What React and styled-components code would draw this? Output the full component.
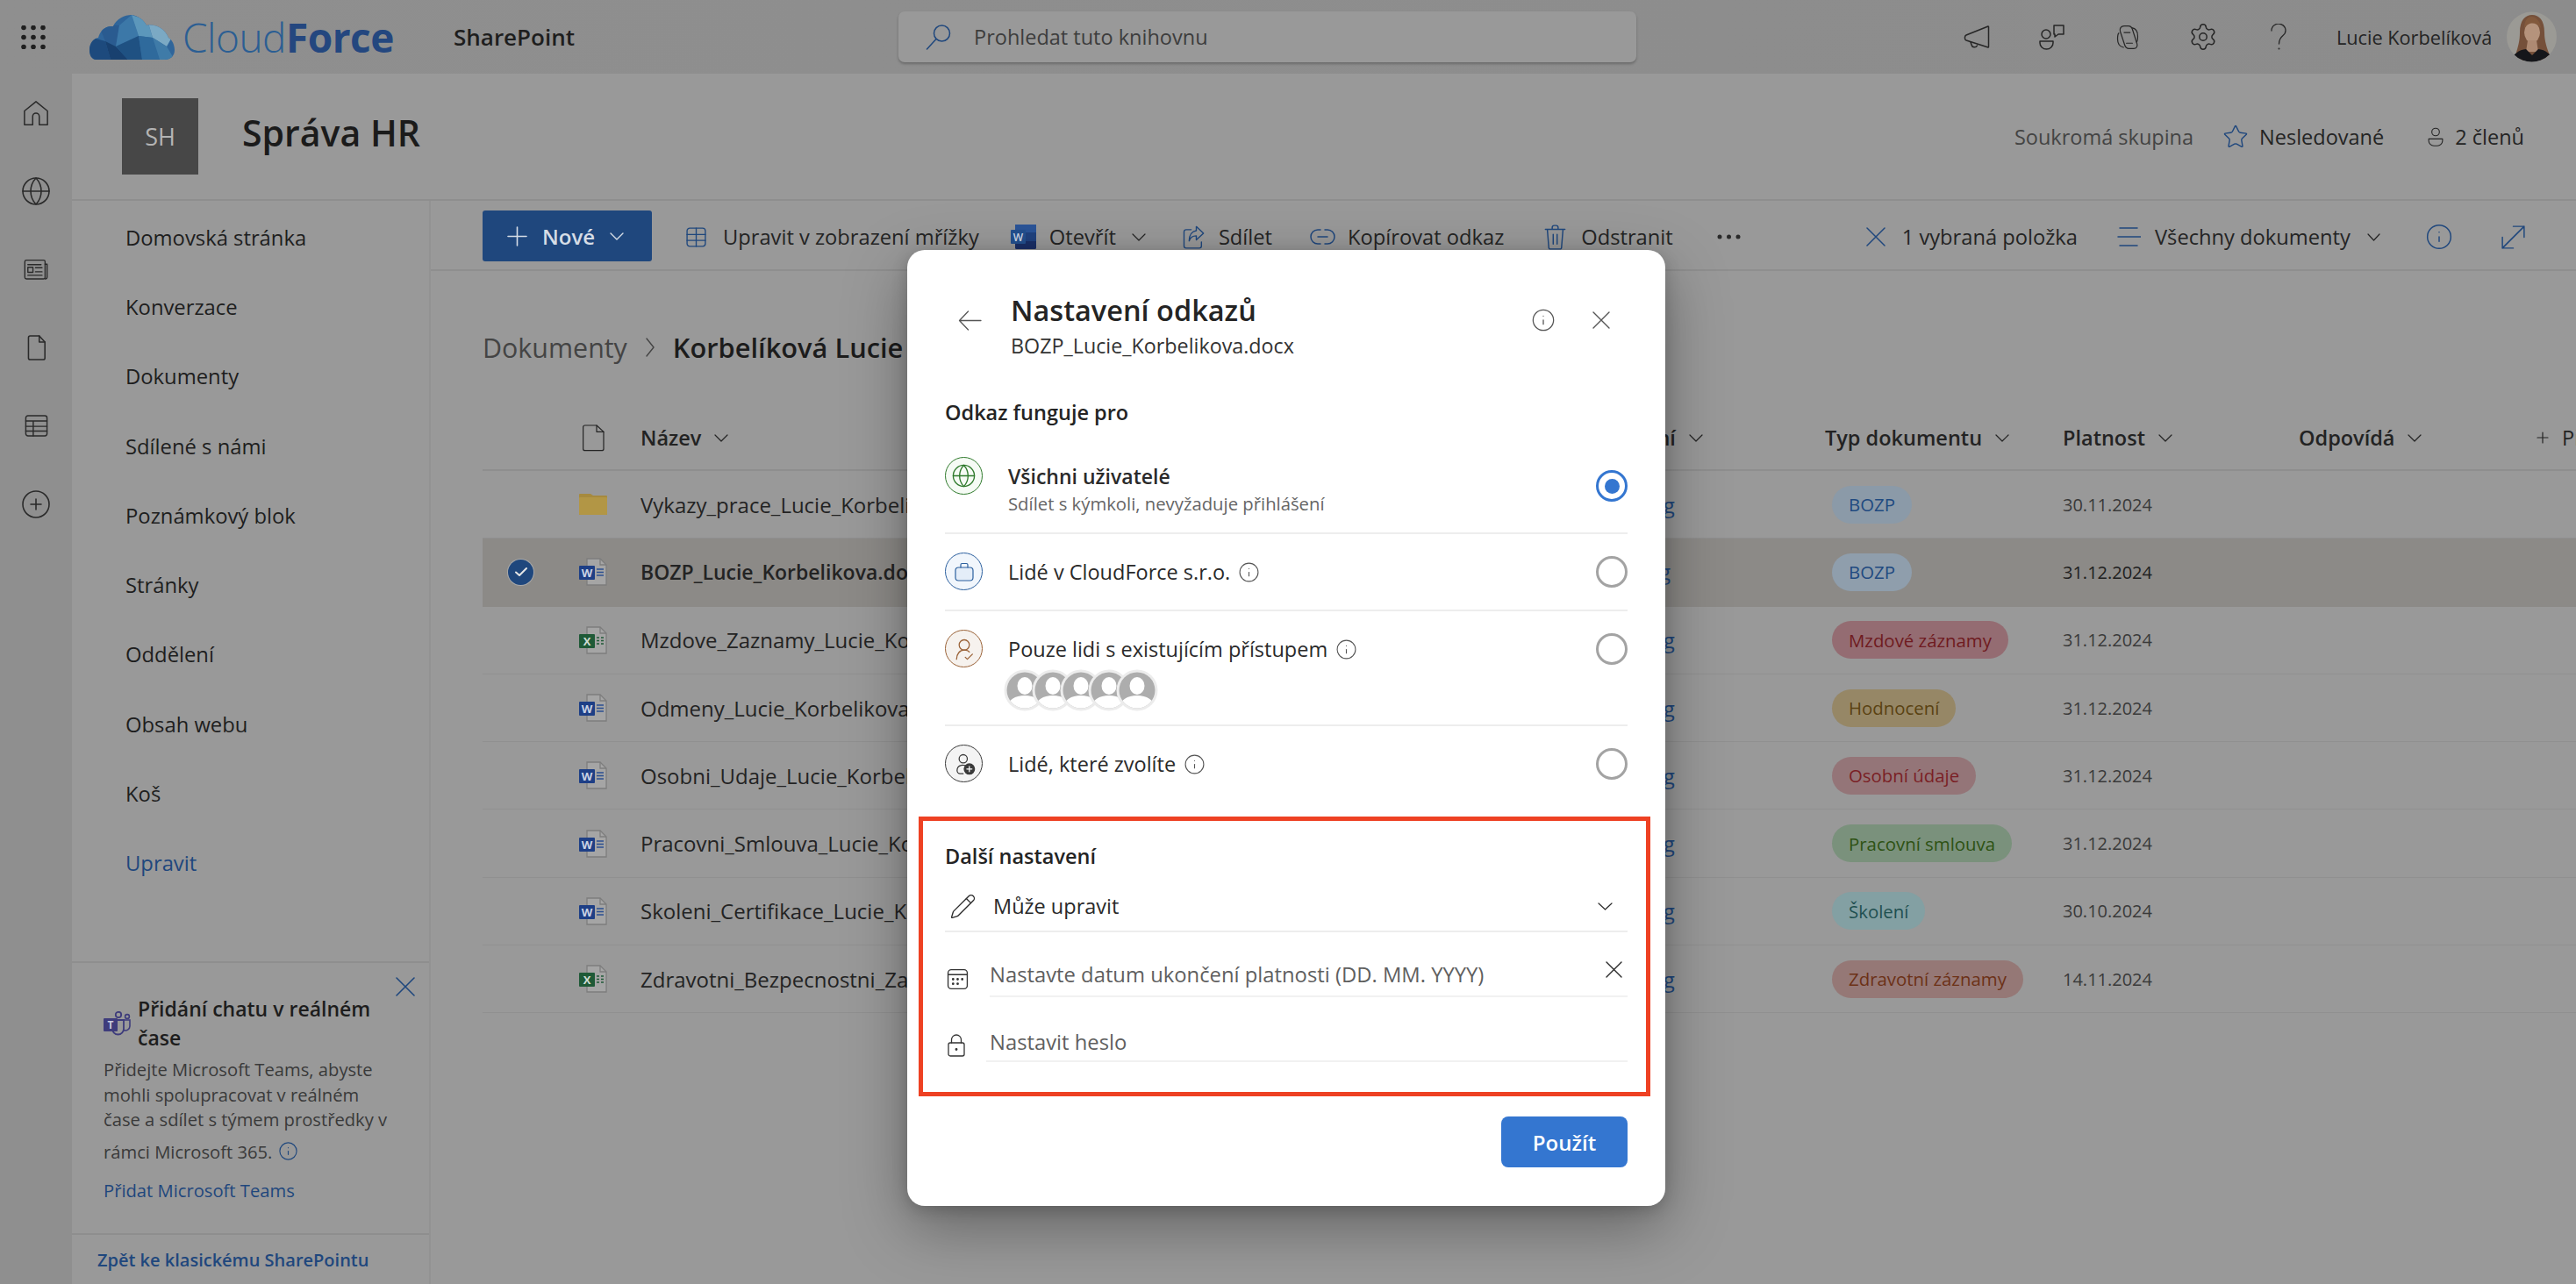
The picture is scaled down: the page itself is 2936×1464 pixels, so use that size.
import React from 'react'
import styled, { createGlobalStyle } from 'styled-components'
import { CirclePlus, Globe, Info, Pencil, Settings, Star } from 'lucide-react'

const FONT = '"Open Sans", "Noto Sans", sans-serif'
const BLUE = '#3476d0'
const DIM_BLUE = '#1f477d'

const Global = createGlobalStyle`
  html, body { margin: 0; padding: 0; background: #999; }
  body { font-family: ${FONT}; color: #1c1c1c; }
  * { box-sizing: border-box; }
`

const Page = styled.div`
  position: relative;
  width: 2936px;
  height: 1464px;
  overflow: hidden;
  display: flex;
  flex-direction: column;
  background: #999;
`

/* top bar */
const TopBar = styled.header`
  height: 84px;
  flex: none;
  display: flex;
  align-items: center;
  background: linear-gradient(90deg, #8f8f8f, #8c8c8c);
`
const Brand = styled.div`
  width: 1024px;
  display: flex;
  align-items: center;
  padding-left: 24px;
`
const BrandGap = styled.span`
  width: 50px;
`
const LogoText = styled.div`
  margin-left: 9px;
  font-size: 46px;
  letter-spacing: -0.5px;
  font-weight: 300;
  color: #2b5e93;
  width: 309px;
  b { font-weight: 700; color: #24477f; }
`
const AppName = styled.div`
  font-size: 26px;
  font-weight: 600;
  color: #1e1e1e;
`
const Search = styled.div`
  width: 841px;
  height: 58px;
  display: flex;
  align-items: center;
  gap: 25px;
  padding-left: 31px;
  background: #999;
  border-radius: 7px;
  box-shadow: 0 2px 3px rgba(0, 0, 0, 0.25);
  font-size: 23.5px;
  color: #3d3d3d;
`
const TopActions = styled.div`
  flex: 1;
  display: flex;
  align-items: center;
  padding-left: 345px;
  color: #262626;
`
const TopIcon = styled.span`
  width: 86px;
  display: flex;
  justify-content: center;
`
const UserName = styled.div`
  margin-left: 23px;
  width: 194px;
  font-size: 21.7px;
  color: #242424;
  white-space: nowrap;
`

/* frame */
const Body = styled.div`
  flex: 1;
  display: flex;
  min-height: 0;
`
const Rail = styled.nav`
  width: 82px;
  flex: none;
  display: flex;
  flex-direction: column;
  align-items: center;
  background: #8f8f8f;
  color: #2a2a2a;
`
const RailSlot = styled.span`
  height: 89.2px;
  display: flex;
  align-items: center;
  justify-content: center;
`
const Content = styled.div`
  flex: 1;
  display: flex;
  flex-direction: column;
  min-width: 0;
`
const Hero = styled.div`
  height: 145px;
  flex: none;
  display: flex;
  align-items: center;
  padding-left: 57px;
  border-bottom: 2px solid #8e8e8e;
`
const SiteTile = styled.div`
  width: 87px;
  height: 87px;
  display: flex;
  align-items: center;
  justify-content: center;
  background: #474747;
  color: #b4b4b4;
  font-size: 27px;
`
const SiteTitle = styled.h1`
  margin: 0 0 9px 50px;
  font-size: 41px;
  font-weight: 600;
  color: #1b1b1b;
`
const HeroMeta = styled.div`
  margin-left: auto;
  display: flex;
  align-items: center;
  padding-right: 59px;
  font-size: 23.5px;
  color: #242424;
`
const MetaLabel = styled.span`
  color: #444;
  margin-right: 33px;
`
const MetaItem = styled.span`
  display: flex;
  align-items: center;
  gap: ${p => p.$gap || 15}px;
  margin-left: ${p => p.$ml || 0}px;
`

const Lower = styled.div`
  flex: 1;
  display: flex;
  min-height: 0;
`
const Sidebar = styled.aside`
  width: 409px;
  flex: none;
  display: flex;
  flex-direction: column;
  border-right: 2px solid #929292;
`
const NavList = styled.div`
  padding-top: 2px;
`
const NavItem = styled.div`
  height: 79.3px;
  display: flex;
  align-items: center;
  padding-left: 61px;
  font-size: 23.8px;
  color: ${p => (p.$link ? DIM_BLUE : '#1e1e1e')};
`
const ChatCard = styled.div`
  position: relative;
  margin-top: auto;
  height: 312px;
  border-top: 2px solid #8e8e8e;
  border-bottom: 2px solid #8e8e8e;
  padding: 36px 0 0 36px;
`
const ChatClose = styled.span`
  position: absolute;
  top: 16px;
  right: 16px;
  color: ${DIM_BLUE};
  display: flex;
`
const ChatHead = styled.div`
  display: flex;
  align-items: center;
  gap: 8px;
  font-size: 23px;
  font-weight: 600;
  line-height: 33px;
  color: #1d1d1d;
`
const ChatText = styled.p`
  margin: ${p => p.$mt || 0}px 0 0;
  font-size: 20.2px;
  line-height: 28.5px;
  color: #3a3a3a;
  white-space: nowrap;
  padding-top: 1px;
`
const LastLine = styled.div`
  display: flex;
  align-items: center;
  gap: 7px;
  margin-top: 7px;
`
const ChatLink = styled.div`
  font-size: 20.2px;
  color: ${DIM_BLUE};
  margin-top: 16px;
`
const ClassicLink = styled.div`
  height: 56px;
  display: flex;
  align-items: center;
  padding-left: 29px;
  font-size: 20px;
  font-weight: 600;
  color: ${DIM_BLUE};
`

/* command bar */
const Main = styled.main`
  flex: 1;
  min-width: 0;
  display: flex;
  flex-direction: column;
`
const CommandBar = styled.div`
  height: 80px;
  flex: none;
  display: flex;
  align-items: center;
  padding-left: 59px;
  border-bottom: 2px solid #8e8e8e;
  font-size: 23.7px;
  color: #242424;
`
const NewButton = styled.div`
  width: 193px;
  height: 58px;
  margin-top: 2px;
  display: flex;
  align-items: center;
  gap: 17px;
  padding-left: 28px;
  background: ${DIM_BLUE};
  border-radius: 3px;
  color: #d6dde6;
  font-size: 24px;
  font-weight: 600;
`
const Command = styled.div`
  display: flex;
  align-items: center;
  gap: ${p => p.$gap || 14}px;
  margin-left: ${p => p.$ml}px;
  padding-top: 4px;
  flex: none;
`
const CommandChevron = styled.span`
  display: flex;
  margin-left: 3px;
`
const IconBlue = styled.span`
  display: flex;
  color: ${DIM_BLUE};
`

/* library */
const Crumbs = styled.div`
  height: 154px;
  flex: none;
  display: flex;
  align-items: center;
  gap: 21px;
  padding: 20px 0 0 59px;
  font-size: 30.4px;
  color: #444;
  strong { font-size: 30.800px; font-weight: 600; color: #1c1c1c; }
`
const COLS = '110px 70px 1060px 290px 271px 269px 271px 1fr'
const HeadRow = styled.div`
  height: 74px;
  margin-left: 59px;
  display: grid;
  grid-template-columns: ${COLS};
  align-items: center;
  border-bottom: 2px solid #8e8e8e;
  font-size: 23.500px;
  color: #232323;
`
const HeadCell = styled.div`
  display: flex;
  align-items: center;
  gap: 15px;
  white-space: nowrap;
  padding-left: ${p => p.$pl || 0}px;
  font-weight: ${p => (p.$regular ? 400 : 600)};
`
const Row = styled.div`
  height: 77.3px;
  margin-left: 59px;
  display: grid;
  grid-template-columns: ${COLS};
  align-items: center;
  font-size: ${p => (p.$selected ? 23 : 24)}px;
  border-bottom: 1.5px solid ${p => (p.$selected ? 'transparent' : '#909090')};
  background: ${p => (p.$selected ? '#8c8a87' : 'transparent')};
  color: #232323;
  font-weight: ${p => (p.$selected ? 600 : 400)};
`
const CheckCell = styled.div`
  display: flex;
  padding-left: 29px;
`
const CheckDot = styled.span`
  width: 29px;
  height: 29px;
  border-radius: 50%;
  background: ${DIM_BLUE};
  box-shadow: 0 0 0 1px #a9a9a9;
  display: flex;
  align-items: center;
  justify-content: center;
`
const NameCell = styled.div`
  white-space: nowrap;
  overflow: hidden;
`
const LinkCell = styled.div`
  color: ${DIM_BLUE};
  font-weight: 400;
`
const Pill = styled.span`
  justify-self: start;
  margin-left: 8px;
  height: 43px;
  padding: 0 19px;
  display: flex;
  align-items: center;
  border-radius: 21.5px;
  background: ${p => p.$bg};
  color: ${p => p.$fg};
  font-size: 20.4px;
  font-weight: 400;
  white-space: nowrap;
`
const DateCell = styled.div`
  font-size: 20px;
  font-weight: 400;
  color: ${p => (p.$selected ? '#202020' : '#3a3a3a')};
`

/* dialog */
const DialogSpot = styled.div`
  position: absolute;
  left: 1034px;
  top: 285px;
  width: 864px;
`
const Dialog = styled.section`
  width: 864px;
  height: 1090px;
  padding: 46px 43px 0;
  background: #fff;
  border-radius: 20px;
  box-shadow: 0 24px 70px rgba(0, 0, 0, 0.34), 0 4px 18px rgba(0, 0, 0, 0.18);
  color: #242424;
`
const DialogHead = styled.div`
  display: grid;
  grid-template-columns: 75px 1fr 60px 55px;
  align-items: center;
`
const BackArrow = styled.span`
  display: flex;
  padding-left: 15px;
  margin-bottom: 12px;
  color: #555;
`
const HeadTitle = styled.h2`
  margin: 0;
  font-size: 32.5px;
  line-height: 46px;
  font-weight: 600;
  color: #242424;
`
const HeadSub = styled.div`
  font-size: 23.3px;
  line-height: 34px;
  color: #333;
`
const HeadIcon = styled.span`
  display: flex;
  padding-left: ${p => p.$pl}px;
  margin-bottom: 12px;
  color: #555;
`
const SectionTitle = styled.h3`
  margin: ${p => p.$mt}px 0 ${p => p.$mb || 0}px;
  font-size: 23.5px;
  line-height: 34px;
  font-weight: 600;
  color: #242424;
`
const Option = styled.div`
  height: ${p => p.$h}px;
  display: flex;
  align-items: flex-start;
  padding-top: 21px;
  border-bottom: ${p => (p.$last ? 'none' : '2px solid #ededed')};
`
const OptionIcon = styled.span`
  width: 43px;
  height: 43px;
  flex: none;
  display: flex;
  align-items: center;
  justify-content: center;
  border-radius: 50%;
  border: 1.5px solid ${p => p.$line};
  background: ${p => p.$bg};
  color: ${p => p.$line};
`
const OptionBody = styled.div`
  flex: 1;
  margin-left: 29px;
`
const OptionTitle = styled.div`
  display: flex;
  align-items: center;
  gap: 9px;
  height: 43px;
  padding-top: 1.5px;
  font-size: ${p => (p.$bold ? 23 : 23.5)}px;
  font-weight: ${p => (p.$bold ? 600 : 400)};
  color: #2a2a2a;
`
const OptionSub = styled.div`
  font-size: 20.3px;
  line-height: 20px;
  color: #666;
`
const InfoGlyph = styled(Info)`
  color: #555;
  flex: none;
`
const Radio = styled.span`
  width: 36px;
  height: 36px;
  margin-top: ${p => p.$mt}px;
  flex: none;
  display: flex;
  align-items: center;
  justify-content: center;
  border-radius: 50%;
  border: ${p => (p.$on ? `3.5px solid ${BLUE}` : '3px solid #a3a3a3')};
  &::after {
    content: '';
    width: 17px;
    height: 17px;
    border-radius: 50%;
    background: ${p => (p.$on ? BLUE : 'transparent')};
  }
`
const Faces = styled.div`
  display: flex;
  margin: 2px 0 0 -5px;
`
const Face = styled.svg`
  width: 48px;
  height: 48px;
  margin-left: ${p => (p.$first ? 0 : -16)}px;
  position: relative;
`
const Annotated = styled.div`
  height: 319px;
  margin: 0 -26px 0 -30px;
  padding: 23px 21px 0 25px;
  border: 5px solid #ee4123;
`
const SelectRow = styled.div`
  height: 70px;
  display: flex;
  align-items: center;
  padding: 12px 17px 0 5px;
  gap: 19px;
  border-bottom: 2px solid #ededed;
  font-size: 23.5px;
  color: #2a2a2a;
  svg:last-child { margin-left: auto; }
`
const FieldRow = styled.div`
  display: flex;
  align-items: flex-end;
`
const FieldIcon = styled.span`
  display: flex;
  width: ${p => p.$w}px;
  flex: none;
  padding-left: ${p => p.$pl}px;
  padding-bottom: ${p => p.$pb}px;
  color: #333;
`
const Field = styled.div`
  flex: 1;
  display: flex;
  justify-content: space-between;
  padding: ${p => p.$pt}px 6px ${p => p.$pb}px ${p => p.$pl || 0}px;
  border-bottom: 2px solid #f1f1f1;
  font-size: 23.8px;
  line-height: 34px;
  color: #5f5f5f;
`
const FieldClose = styled.span`
  display: flex;
  height: 19px;
  margin-top: 2px;
  color: #2a2a2a;
`
const DialogFoot = styled.div`
  display: flex;
  justify-content: flex-end;
  margin-top: 23px;
`
const ApplyButton = styled.div`
  width: 144px;
  height: 58px;
  display: flex;
  align-items: center;
  justify-content: center;
  border-radius: 8px;
  background: ${BLUE};
  color: #fff;
  font-size: 24px;
  font-weight: 600;
`

/* drawings */
const Stroke = ({ w, h, vb = '0 0 24 24', sw = 1.1, children }) => (
  <svg width={w} height={h || w} viewBox={vb} fill="none" stroke="currentColor" strokeWidth={sw} strokeLinecap="round" strokeLinejoin="round">
    {children}
  </svg>
)

const Cross = ({ size, sw = 1.5 }) => (
  <Stroke w={size} vb={`0 0 ${size} ${size}`} sw={sw}><path d={`M1 1 ${size - 1} ${size - 1}M${size - 1} 1 1 ${size - 1}`} /></Stroke>
)
const Chev = ({ w = 16, h = 9, sw = 1.2 }) => (
  <Stroke w={w} h={h} vb={`0 0 ${w} ${h}`} sw={sw}><path d={`M1 1 ${w / 2} ${h - 1} ${w - 1} 1`} /></Stroke>
)
const PlusLine = ({ size, sw = 1.4 }) => (
  <Stroke w={size} vb={`0 0 ${size} ${size}`} sw={sw}><path d={`M${size / 2} 1v${size - 2}M1 ${size / 2}h${size - 2}`} /></Stroke>
)

const Waffle = () => (
  <svg width="28" height="27" viewBox="0 0 28 27" fill="#1f1f1f">
    {[3, 14, 25].flatMap(y => [3, 14, 25].map(x => <circle key={`${x}-${y}`} cx={x} cy={y - 0.5} r="2.8" />))}
  </svg>
)

const CloudLogo = () => (
  <svg width="97" height="51" viewBox="0 0 97 51">
    <defs>
      <clipPath id="cloud">
        <path d="M8 51C2 51 0 45 0 40c0-7 4-13 10-14 2-8 8-14 17-13C31 4 40 0 48 0c8 1 14 6 17 12 11-2 21 4 25 14 5 3 7 9 7 14 0 7-5 11-11 11z" />
      </clipPath>
    </defs>
    <g clipPath="url(#cloud)">
      <rect width="97" height="51" fill="#2f659a" />
      <polygon points="0,51 0,25 18,30 24,51" fill="#1d4a7d" />
      <polygon points="18,30 10,10 34,12 30,36" fill="#2a5b90" />
      <polygon points="24,51 18,30 30,36 44,51" fill="#18406f" />
      <polygon points="34,12 48,0 56,24 30,36" fill="#3c78a8" />
      <polygon points="48,0 66,6 72,26 56,24" fill="#5c97bb" />
      <polygon points="30,36 56,24 60,51 44,51" fill="#1f5182" />
      <polygon points="56,24 72,26 80,51 60,51" fill="#2f6a9c" />
      <polygon points="72,26 66,6 97,20 88,36" fill="#7ba9c4" />
      <polygon points="72,26 88,36 97,51 80,51" fill="#3f7ba8" />
    </g>
  </svg>
)

const Portrait = () => (
  <svg width="57" height="58" viewBox="0 0 57 58">
    <defs>
      <clipPath id="portrait"><circle cx="28.500" cy="29" r="28.500" /></clipPath>
    </defs>
    <g clipPath="url(#portrait)">
      <rect width="57" height="58" fill="#9b9a95" />
      <path d="M10 50C13 40 15 34 15 24 15 10 21 4 29 4s14 6 14 20c0 10 3 18 6 26l-8 6H16z" fill="#75503a" />
      <ellipse cx="29" cy="24" rx="9" ry="11.500" fill="#b5937c" />
      <path d="M24 33h10l2 13H22z" fill="#ae8a73" />
      <path d="M5 58c2-10 9-14 17-15l7 7 7-7c8 1 15 5 17 15z" fill="#15161a" />
      <path d="M20 20c3-7 12-10 19-1-1-9-6-13-11-13s-8 6-8 14z" fill="#82593c" />
    </g>
  </svg>
)

const WordIcon = () => (
  <svg width="32" height="32" viewBox="0 0 32 32">
    <path d="M9 1h15l7 7v23H9z" fill="#a5a5a5" stroke="#7d7d7d" strokeWidth="1.3" />
    <path d="M24 1v7h7" fill="none" stroke="#7d7d7d" strokeWidth="1.3" />
    <path d="M20 13h8M20 16.500h8M20 20h8" stroke="#2b4f91" strokeWidth="1.4" />
    <rect x="0" y="9" width="18" height="16" rx="1" fill="#1e3f86" />
    <text x="9" y="22" textAnchor="middle" fontFamily={FONT} fontSize="13" fontWeight="700" fill="#c9d2e4">W</text>
  </svg>
)

const ExcelIcon = () => (
  <svg width="32" height="32" viewBox="0 0 32 32">
    <path d="M9 1h15l7 7v23H9z" fill="#a5a5a5" stroke="#7d7d7d" strokeWidth="1.3" />
    <path d="M24 1v7h7" fill="none" stroke="#7d7d7d" strokeWidth="1.3" />
    <path d="M20 13h3M25 13h3M20 16.500h3M25 16.500h3M20 20h3M25 20h3" stroke="#1f5a37" strokeWidth="1.6" />
    <rect x="0" y="9" width="18" height="16" rx="1" fill="#1f5a37" />
    <text x="9" y="22" textAnchor="middle" fontFamily={FONT} fontSize="13" fontWeight="700" fill="#cfdcd3">X</text>
  </svg>
)

const FolderIcon = () => (
  <svg width="32" height="32" viewBox="0 0 32 32">
    <path d="M0 5a1 1 0 0 1 1-1h12l3 2h15a1 1 0 0 1 1 1v20a1 1 0 0 1-1 1H1a1 1 0 0 1-1-1z" fill="#a68a3e" />
    <rect x="0" y="8" width="32" height="20" rx="1" fill="#b29645" />
  </svg>
)

const BigWordIcon = () => (
  <svg width="29" height="28" viewBox="0 0 29 28">
    <rect x="5" y="0" width="24" height="28" rx="1.500" fill="#1a2f67" />
    <rect x="5" y="0" width="24" height="9" fill="#2a5498" />
    <rect x="5" y="9" width="24" height="10" fill="#20427f" />
    <rect x="0" y="6" width="17" height="16" rx="1" fill="#23508f" />
    <text x="8.500" y="18.500" textAnchor="middle" fontFamily={FONT} fontSize="12" fontWeight="600" fill="#cfd8e6">W</text>
  </svg>
)

const TeamsIcon = () => (
  <svg width="31" height="28" viewBox="0 0 31 28">
    <circle cx="17" cy="4" r="3.200" fill="none" stroke="#3e3c7c" strokeWidth="1.800" />
    <circle cx="27" cy="6" r="2.400" fill="none" stroke="#3e3c7c" strokeWidth="1.600" />
    <path d="M22 10h8v7a5 5 0 0 1-7 4.500" fill="none" stroke="#3e3c7c" strokeWidth="1.600" />
    <path d="M10 10h13v10a6.500 6.500 0 0 1-13 0z" fill="none" stroke="#3e3c7c" strokeWidth="1.800" />
    <rect x="0" y="8" width="16" height="15" rx="1" fill="#3e3c7c" />
    <text x="8" y="20" textAnchor="middle" fontFamily={FONT} fontSize="12" fontWeight="700" fill="#c9c9dd">T</text>
  </svg>
)

const PersonFace = ({ first }) => (
  <Face $first={first} viewBox="0 0 48 48">
    <defs>
      <clipPath id="faceclip"><circle cx="24" cy="24" r="20.500" /></clipPath>
    </defs>
    <circle cx="24" cy="24" r="23.500" fill="#ececec" />
    <g clipPath="url(#faceclip)">
      <rect width="48" height="48" fill="#adadad" />
      <ellipse cx="24" cy="19" rx="8.500" ry="10" fill="#fff" />
      <path d="M3 48c0-12 9-18 21-18s21 6 21 18z" fill="#fff" />
    </g>
  </Face>
)

const rows = [
  { name: 'Vykazy_prace_Lucie_Korbelikova', icon: <FolderIcon />, tag: 'BOZP', bg: '#8b9aa8', fg: '#1f4a80', date: '30.11.2024' },
  { name: 'BOZP_Lucie_Korbelikova.docx', icon: <WordIcon />, tag: 'BOZP', bg: '#8f9eac', fg: '#1f4a80', date: '31.12.2024', selected: true },
  { name: 'Mzdove_Zaznamy_Lucie_Korbelikova.xlsx', icon: <ExcelIcon />, tag: 'Mzdové záznamy', bg: '#946c72', fg: '#6f1a20', date: '31.12.2024' },
  { name: 'Odmeny_Lucie_Korbelikova.docx', icon: <WordIcon />, tag: 'Hodnocení', bg: '#968766', fg: '#5a4212', date: '31.12.2024' },
  { name: 'Osobni_Udaje_Lucie_Korbelikova.docx', icon: <WordIcon />, tag: 'Osobní údaje', bg: '#947578', fg: '#7a1f25', date: '31.12.2024' },
  { name: 'Pracovni_Smlouva_Lucie_Korbelikova.docx', icon: <WordIcon />, tag: 'Pracovní smlouva', bg: '#7a917c', fg: '#2e5213', date: '31.12.2024' },
  { name: 'Skoleni_Certifikace_Lucie_Korbelikova.docx', icon: <WordIcon />, tag: 'Školení', bg: '#83a0a3', fg: '#1e4f50', date: '30.10.2024' },
  { name: 'Zdravotni_Bezpecnostni_Zaznamy.xlsx', icon: <ExcelIcon />, tag: 'Zdravotní záznamy', bg: '#957876', fg: '#6c3116', date: '14.11.2024' },
]

const navItems = ['Domovská stránka', 'Konverzace', 'Dokumenty', 'Sdílené s námi', 'Poznámkový blok', 'Stránky', 'Oddělení', 'Obsah webu', 'Koš']

export default function App() {
  return (
    <Page>
      <Global />
      <TopBar>
        <Brand>
          <Waffle />
          <BrandGap />
          <CloudLogo />
          <LogoText>Cloud<b>Force</b></LogoText>
          <AppName>SharePoint</AppName>
        </Brand>
        <Search>
          <IconBlue>
            <Stroke w={30} vb="0 0 30 30" sw={1.500}><circle cx="18.500" cy="11" r="9" /><path d="M12 17.500 1.500 29" /></Stroke>
          </IconBlue>
          Prohledat tuto knihovnu
        </Search>
        <TopActions>
          <TopIcon>
            <Stroke w={30} h={28} vb="0 0 30 28" sw={1.500}><path d="M28 2 3 12a2.500 2.500 0 0 0-1.500 2.300v1.400A2.500 2.500 0 0 0 3 18l25 8a.8.8 0 0 0 .5-.8V3a.8.8 0 0 0-.5-1z" /><path d="M8 20l1 3a3.500 3.500 0 0 0 6.500 1" /></Stroke>
          </TopIcon>
          <TopIcon>
            <Stroke w={30} vb="0 0 30 30" sw={1.500}><circle cx="8" cy="12" r="5" /><path d="M1 20h15v2a7.500 7 0 0 1-15 0z" /><path d="M17 2h11v10h-6l-4 3v-3h-1z" /></Stroke>
          </TopIcon>
          <TopIcon>
            <Stroke w={30} h={27} vb="3 2 18 20" sw={0.900}><path d="M9 2.500h3.500c2 0 3 1 3.600 3l3.800 12c.7 2.200-.5 4-2.800 4h-4c-2 0-3-1-3.600-3L5.700 7c-.7-2.500.8-4.500 3.300-4.500z" /><path d="M15.500 4c3 .5 5 3 5 7s-1 5-1 5M8.500 20.500c-3-.5-5-3-5-7s1-5 1-5M9 8h5M11 17h5" /></Stroke>
          </TopIcon>
          <TopIcon><Settings size={34} strokeWidth={1.050} /></TopIcon>
          <TopIcon>
            <Stroke w={18} h={30} vb="0 0 18 30" sw={1.300}><path d="M1 8a8 7.500 0 1 1 13 5.500C11 16 9.500 18 9.500 23" /><circle cx="9.500" cy="28.500" r=".4" /></Stroke>
          </TopIcon>
          <UserName>Lucie Korbelíková</UserName>
          <Portrait />
        </TopActions>
      </TopBar>
      <Body>
        <Rail>
          <RailSlot>
            <Stroke w={30} sw={1.200}><path d="M12 1.500 1.500 10v12.500h7.500V15a3 3 0 0 1 6 0v7.500h7.500V10z" /></Stroke>
          </RailSlot>
          <RailSlot><Globe size={36} strokeWidth={1.050} /></RailSlot>
          <RailSlot>
            <Stroke w={30} vb="0 0 26 24" sw={1.200}><path d="M2 4.500A1.500 1.500 0 0 1 3.500 3h17A1.500 1.500 0 0 1 22 4.500V20a1.500 1.500 0 0 1-1.500 1.500h-17A1.500 1.500 0 0 1 2 20z" /><path d="M22 7h2v12.500a2 2 0 0 1-2 2" /><rect x="5" y="10" width="5" height="5" /><path d="M5 7.500h13M12.500 10.500H19M12.500 14.500H19M5 18h14" /></Stroke>
          </RailSlot>
          <RailSlot>
            <Stroke w={31} sw={1.200}><path d="M6.500 1.500h8l5 5.500v14a1.500 1.500 0 0 1-1.500 1.500H6.500A1.500 1.500 0 0 1 5 21V3a1.500 1.500 0 0 1 1.500-1.500z" /><path d="M14.500 1.500V7h5" /></Stroke>
          </RailSlot>
          <RailSlot>
            <Stroke w={29} sw={1.200}><rect x="2" y="2.500" width="20" height="19" rx="2" /><path d="M2 7.500h20M2 12.500h20M2 17h20M9 7.500V21.500" /></Stroke>
          </RailSlot>
          <RailSlot><CirclePlus size={36} strokeWidth={1.050} /></RailSlot>
        </Rail>
        <Content>
          <Hero>
            <SiteTile>SH</SiteTile>
            <SiteTitle>Správa HR</SiteTitle>
            <HeroMeta>
              <MetaLabel>Soukromá skupina</MetaLabel>
              <MetaItem $gap={12}>
                <IconBlue><Star size={30} strokeWidth={1.150} /></IconBlue>
                Nesledované
              </MetaItem>
              <MetaItem $ml={48} $gap={11}>
                <Stroke w={22} vb="0 0 22 28" sw={1.400}><circle cx="11" cy="7" r="5.500" /><path d="M1 17h20v3a7.500 7.500 0 0 1-7.500 7h-5A7.500 7.500 0 0 1 1 20z" /></Stroke>
                2 členů
              </MetaItem>
            </HeroMeta>
          </Hero>
          <Lower>
            <Sidebar>
              <NavList>
                {navItems.map(item => (
                  <NavItem key={item}>{item}</NavItem>
                ))}
                <NavItem $link>Upravit</NavItem>
              </NavList>
              <ChatCard>
                <ChatClose><Cross size={22} sw={1.600} /></ChatClose>
                <ChatHead>
                  <TeamsIcon />
                  <span>Přidání chatu v reálném<br />čase</span>
                </ChatHead>
                <ChatText $mt={4}>
                  Přidejte Microsoft Teams, abyste<br />
                  mohli spolupracovat v reálném<br />
                  čase a sdílet s týmem prostředky v
                </ChatText>
                <LastLine>
                  <ChatText>rámci Microsoft 365.</ChatText>
                  <IconBlue><Info size={23} strokeWidth={1.200} /></IconBlue>
                </LastLine>
                <ChatLink>Přidat Microsoft Teams</ChatLink>
              </ChatCard>
              <ClassicLink>Zpět ke klasickému SharePointu</ClassicLink>
            </Sidebar>
            <Main>
              <CommandBar>
                <NewButton>
                  <PlusLine size={23} sw={1.600} />
                  Nové
                  <Chev sw={1.400} />
                </NewButton>
                <Command $ml={38} $gap={18}>
                  <IconBlue>
                    <Stroke w={25} sw={1.300}><rect x="2" y="2" width="20" height="20" rx="3" /><path d="M2 9h20M2 15.500h20M12 2v20" /></Stroke>
                  </IconBlue>
                  Upravit v zobrazení mřížky
                </Command>
                <Command $ml={36} $gap={15}>
                  <BigWordIcon />
                  Otevřít
                  <CommandChevron><Chev /></CommandChevron>
                </Command>
                <Command $ml={40} $gap={15}>
                  <IconBlue>
                    <Stroke w={28} sw={1.200}><path d="M10 5H5a2 2 0 0 0-2 2v14a2 2 0 0 0 2 2h13a2 2 0 0 0 2-2v-4" /><path d="M15 2l7 6.500-7 6.500v-4c-4 0-6 2-7 5 0-6 3-9.500 7-10z" /></Stroke>
                  </IconBlue>
                  Sdílet
                </Command>
                <Command $ml={43} $gap={14}>
                  <IconBlue>
                    <Stroke w={29} h={20} vb="0 0 29 20" sw={1.500}><path d="M12 2H9a8 8 0 0 0 0 16h3M17 2h3a8 8 0 0 1 0 16h-3M9 10h11" /></Stroke>
                  </IconBlue>
                  Kopírovat odkaz
                </Command>
                <Command $ml={45} $gap={16}>
                  <IconBlue>
                    <Stroke w={27} h={29} vb="0 0 24 26" sw={1.300}><path d="M2 5h20M4 5l1.500 18.500A1.500 1.500 0 0 0 7 25h10a1.500 1.500 0 0 0 1.500-1.500L20 5M9 5V3a2 2 0 0 1 2-2h2a2 2 0 0 1 2 2v2M10 10v10M14 10v10" /></Stroke>
                  </IconBlue>
                  Odstranit
                </Command>
                <Command $ml={50}>
                  <svg width="27" height="6" viewBox="0 0 27 6" fill="#2a2a2a"><circle cx="3" cy="3" r="2.500" /><circle cx="13.500" cy="3" r="2.500" /><circle cx="24" cy="3" r="2.500" /></svg>
                </Command>
                <Command $ml={143} $gap={19}>
                  <IconBlue><Cross size={22} sw={1.500} /></IconBlue>
                  1 vybraná položka
                </Command>
                <Command $ml={44} $gap={16}>
                  <IconBlue>
                    <Stroke w={28} vb="0 0 28 24" sw={1.500}><path d="M4 2h20M2 12h26M4 22h20" /></Stroke>
                  </IconBlue>
                  Všechny dokumenty
                  <CommandChevron><Chev w={15} /></CommandChevron>
                </Command>
                <Command $ml={51}>
                  <IconBlue><Info size={32} strokeWidth={1.100} /></IconBlue>
                </Command>
                <Command $ml={55}>
                  <IconBlue>
                    <Stroke w={27} sw={1.300}><path d="M23 1 1 23M12 1h11v11M1 12v11h11" /></Stroke>
                  </IconBlue>
                </Command>
              </CommandBar>
              <Crumbs>
                Dokumenty
                <Stroke w={10} h={22} vb="0 0 10 22" sw={1.400}><path d="M1 1l8 10-8 10" /></Stroke>
                <strong>Korbelíková Lucie</strong>
              </Crumbs>
              <HeadRow>
                <span />
                <Stroke w={32} sw={0.900}><path d="M5 1.500h10l6 5.500v14.500a1.500 1.500 0 0 1-1.500 1.500H5a1.500 1.500 0 0 1-1.500-1.500V3A1.500 1.500 0 0 1 5 1.500z" /><path d="M15 1.500V7h6" /></Stroke>
                <HeadCell>Název <Chev /></HeadCell>
                <HeadCell $pl={17}>Oddělení <Chev /></HeadCell>
                <HeadCell>Typ dokumentu <Chev /></HeadCell>
                <HeadCell>Platnost <Chev /></HeadCell>
                <HeadCell>Odpovídá <Chev /></HeadCell>
                <HeadCell $regular><PlusLine size={14} sw={1.200} /> Při</HeadCell>
              </HeadRow>
              {rows.map(row => (
                <Row key={row.name} $selected={row.selected}>
                  <CheckCell>
                    {row.selected && (
                      <CheckDot>
                        <svg width="16" height="12" viewBox="0 0 16 12" fill="none" stroke="#e6e6e6" strokeWidth="2" strokeLinecap="round" strokeLinejoin="round"><path d="M2 6.500 6 10l8-8" /></svg>
                      </CheckDot>
                    )}
                  </CheckCell>
                  {row.icon}
                  <NameCell>{row.name}</NameCell>
                  <LinkCell>Consulting</LinkCell>
                  <Pill $bg={row.bg} $fg={row.fg}>{row.tag}</Pill>
                  <DateCell $selected={row.selected}>{row.date}</DateCell>
                  <span />
                  <span />
                </Row>
              ))}
            </Main>
          </Lower>
        </Content>
      </Body>
      <DialogSpot>
        <Dialog>
          <DialogHead>
            <BackArrow>
              <Stroke w={27} h={23} vb="0 0 27 23" sw={1.300}><path d="M26 11.500H2M11.500 1 1.500 11.500l10 10.500" /></Stroke>
            </BackArrow>
            <div>
              <HeadTitle>Nastavení odkazů</HeadTitle>
              <HeadSub>BOZP_Lucie_Korbelikova.docx</HeadSub>
            </div>
            <HeadIcon $pl={5}><Info size={28} strokeWidth={1.100} /></HeadIcon>
            <HeadIcon $pl={15}><Cross size={20} sw={1.400} /></HeadIcon>
          </DialogHead>
          <SectionTitle $mt={42} $mb={13}>Odkaz funguje pro</SectionTitle>
          <Option $h={109}>
            <OptionIcon $line="#2f7a2c" $bg="#f6fbf5"><Globe size={29} strokeWidth={1.100} /></OptionIcon>
            <OptionBody>
              <OptionTitle $bold>Všichni uživatelé</OptionTitle>
              <OptionSub>Sdílet s kýmkoli, nevyžaduje přihlášení</OptionSub>
            </OptionBody>
            <Radio $on $mt={15} />
          </Option>
          <Option $h={88}>
            <OptionIcon $line="#2b5f9e" $bg="#f1f6fc">
              <Stroke w={24} sw={1.200}><rect x="2" y="7" width="20" height="15" rx="3.500" fill="#e4edf8" /><path d="M8 7V4a1.500 1.500 0 0 1 1.500-1.500h5A1.500 1.500 0 0 1 16 4v3" /></Stroke>
            </OptionIcon>
            <OptionBody>
              <OptionTitle>Lidé v CloudForce s.r.o. <InfoGlyph size={25} strokeWidth={1.050} /></OptionTitle>
            </OptionBody>
            <Radio $mt={4} />
          </Option>
          <Option $h={131}>
            <OptionIcon $line="#9a6237" $bg="#f6f2ee">
              <Stroke w={28}><circle cx="12" cy="8" r="5" /><path d="M4.500 22c0-5 3-9 7.500-9 2 0 4 .5 5 2M13 20l2 2 5-5" /></Stroke>
            </OptionIcon>
            <OptionBody>
              <OptionTitle>Pouze lidi s existujícím přístupem <InfoGlyph size={25} strokeWidth={1.050} /></OptionTitle>
              <Faces>
                {[0, 1, 2, 3, 4].map(i => <PersonFace key={i} first={i === 0} />)}
              </Faces>
            </OptionBody>
            <Radio $mt={4} />
          </Option>
          <Option $h={103} $last>
            <OptionIcon $line="#3a3a3a" $bg="#f4f4f4">
              <Stroke w={28}><circle cx="11" cy="7" r="4" /><path d="M13 13.500c-1-.3-3-.5-4-.2-3 .6-4 3-4 5.200a3 3 0 0 0 3 3h3" /><circle cx="17" cy="17" r="5" fill="#3a3a3a" /><path d="M17 14.500v5M14.500 17h5" stroke="#fff" /></Stroke>
            </OptionIcon>
            <OptionBody>
              <OptionTitle>Lidé, které zvolíte <InfoGlyph size={25} strokeWidth={1.050} /></OptionTitle>
            </OptionBody>
            <Radio $mt={4} />
          </Option>
          <Annotated>
            <SectionTitle $mt={0}>Další nastavení</SectionTitle>
            <SelectRow>
              <Pencil size={31} strokeWidth={1.050} />
              Může upravit
              <Chev w={17} />
            </SelectRow>
            <FieldRow>
              <FieldIcon $w={51} $pl={2} $pb={8}>
                <Stroke w={25} sw={1.300}><rect x="1.500" y="1.500" width="21" height="21" rx="3.500" /><path d="M1.500 7h21" /><circle cx="7" cy="12" r=".7" fill="currentColor" /><circle cx="12" cy="12" r=".7" fill="currentColor" /><circle cx="17" cy="12" r=".7" fill="currentColor" /><circle cx="7" cy="17" r=".7" fill="currentColor" /><circle cx="12" cy="17" r=".7" fill="currentColor" /></Stroke>
              </FieldIcon>
              <Field $pt={31} $pb={7}>
                Nastavte datum ukončení platnosti (DD. MM. YYYY)
                <FieldClose><Cross size={19} sw={1.400} /></FieldClose>
              </Field>
            </FieldRow>
            <FieldRow>
              <FieldIcon $w={47} $pl={3} $pb={6}>
                <Stroke w={20} h={26} vb="0 0 20 26" sw={1.300}><rect x="1" y="10" width="18" height="15" rx="2" /><path d="M4.500 10V6.500a5.500 5.500 0 0 1 11 0V10" /><circle cx="10" cy="17.500" r=".8" fill="currentColor" /></Stroke>
              </FieldIcon>
              <Field $pt={34} $pb={4} $pl={4}>Nastavit heslo</Field>
            </FieldRow>
          </Annotated>
          <DialogFoot>
            <ApplyButton>Použít</ApplyButton>
          </DialogFoot>
        </Dialog>
      </DialogSpot>
    </Page>
  )
}
